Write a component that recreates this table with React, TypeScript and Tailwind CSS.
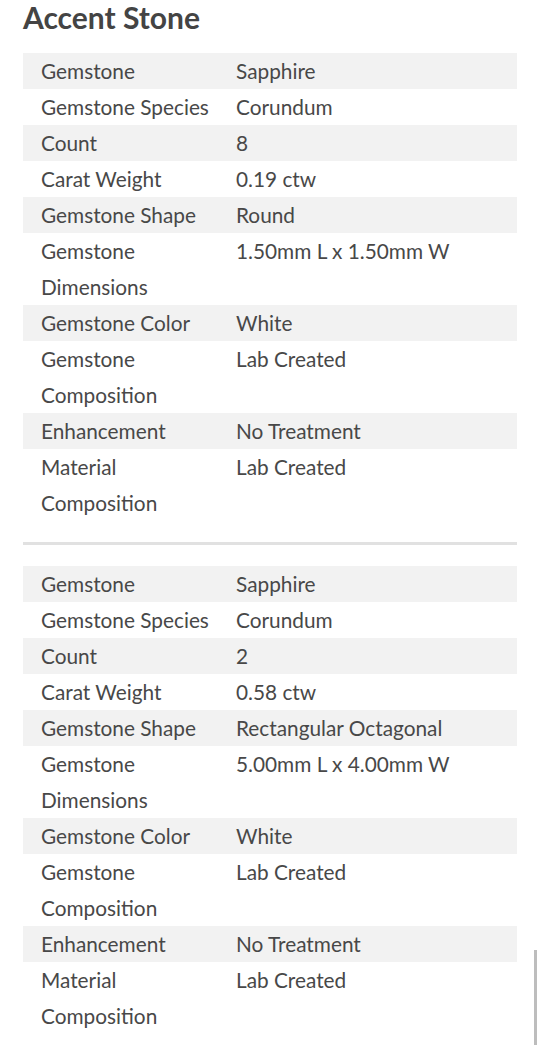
const rowsA: [string, string][] = [
  ["Gemstone", "Sapphire"],
  ["Gemstone Species", "Corundum"],
  ["Count", "8"],
  ["Carat Weight", "0.19 ctw"],
  ["Gemstone Shape", "Round"],
  ["Gemstone Dimensions", "1.50mm L x 1.50mm W"],
  ["Gemstone Color", "White"],
  ["Gemstone Composition", "Lab Created"],
  ["Enhancement", "No Treatment"],
  ["Material Composition", "Lab Created"],
];

const rowsB: [string, string][] = [
  ["Gemstone", "Sapphire"],
  ["Gemstone Species", "Corundum"],
  ["Count", "2"],
  ["Carat Weight", "0.58 ctw"],
  ["Gemstone Shape", "Rectangular Octagonal"],
  ["Gemstone Dimensions", "5.00mm L x 4.00mm W"],
  ["Gemstone Color", "White"],
  ["Gemstone Composition", "Lab Created"],
  ["Enhancement", "No Treatment"],
  ["Material Composition", "Lab Created"],
];

function SpecTable({ rows }: { rows: [string, string][] }) {
  return (
    <div className="flex flex-col">
      {rows.map(([label, value], i) => (
        <div
          key={label}
          className={`grid grid-cols-[213px_1fr] ${i % 2 === 0 ? "bg-[#f2f2f2]" : "bg-white"}`}
        >
          <div className="pl-[18px] pr-2">{label}</div>
          <div>{value}</div>
        </div>
      ))}
    </div>
  );
}

export default function App() {
  return (
    <div
      className="relative min-h-[1056px] bg-white text-[#484848] text-[20.8px] leading-[36px]"
      style={{ fontFamily: "Lato, 'Open Sans', sans-serif" }}
    >
      <div className="px-[23px] pr-[21px]">
        <h2 className="text-[30px] font-bold leading-[34px] text-[#444] h-[53px]">Accent Stone</h2>
        <SpecTable rows={rowsA} />
        <div className="my-[21px] h-[3px] bg-[#e1e1e1]" />
        <SpecTable rows={rowsB} />
      </div>
      <div className="absolute right-[1px] top-[950px] h-[95px] w-[3px] bg-[#bdbdbd]" />
    </div>
  );
}
